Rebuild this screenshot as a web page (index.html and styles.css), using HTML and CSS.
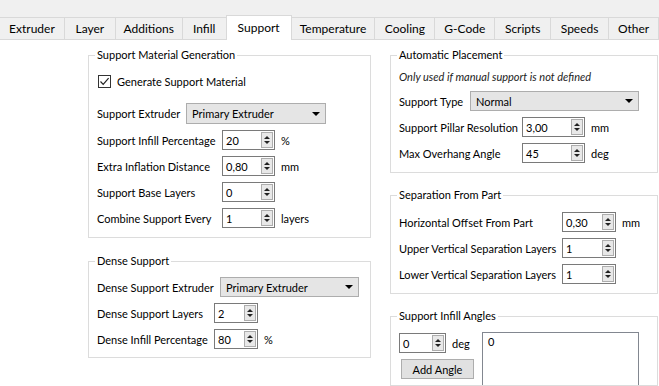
FILE: index.html
```html
<!DOCTYPE html>
<html lang="en">
<head>
    <meta charset="UTF-8">
    <title>Support Settings</title>
    <link rel="stylesheet" href="styles.css">
</head>
<body>
    <!-- Tab bar -->
    <div class="tabbar">
        <div class="tab t-extruder">Extruder</div>
        <div class="tab t-layer">Layer</div>
        <div class="tab t-additions">Additions</div>
        <div class="tab t-infill">Infill</div>
        <div class="tab t-support active">Support</div>
        <div class="tab t-temperature">Temperature</div>
        <div class="tab t-cooling">Cooling</div>
        <div class="tab t-gcode">G-Code</div>
        <div class="tab t-scripts">Scripts</div>
        <div class="tab t-speeds">Speeds</div>
        <div class="tab t-other">Other</div>
    </div>

    <div class="pane">
        <!-- Left column -->
        <div class="col col-left">
            <fieldset class="group g-material">
                <legend>Support Material Generation</legend>
                <div class="check-row">
                    <span class="checkbox">
                        <svg width="11" height="11" viewBox="0 0 11 11"><path d="M1.5 5.5 L4.2 8.3 L9.6 2.2" fill="none" stroke="#222" stroke-width="1.2"/></svg>
                    </span>
                    <span>Generate Support Material</span>
                </div>
                <div class="row row-combo">
                    <span class="lbl w-89">Support Extruder</span>
                    <div class="combo w-140">Primary Extruder<span class="caret"></span></div>
                </div>
                <div class="row">
                    <span class="lbl w-125">Support Infill Percentage</span>
                    <div class="spin w-53"><span class="val">20</span><span class="arrows"><i class="up"></i><i class="down"></i></span></div>
                    <span class="unit">%</span>
                </div>
                <div class="row">
                    <span class="lbl w-125">Extra Inflation Distance</span>
                    <div class="spin w-53"><span class="val">0,80</span><span class="arrows"><i class="up"></i><i class="down"></i></span></div>
                    <span class="unit">mm</span>
                </div>
                <div class="row">
                    <span class="lbl w-125">Support Base Layers</span>
                    <div class="spin w-53"><span class="val">0</span><span class="arrows"><i class="up"></i><i class="down"></i></span></div>
                </div>
                <div class="row">
                    <span class="lbl w-125">Combine Support Every</span>
                    <div class="spin w-53"><span class="val">1</span><span class="arrows"><i class="up"></i><i class="down"></i></span></div>
                    <span class="unit">layers</span>
                </div>
            </fieldset>

            <fieldset class="group g-dense">
                <legend>Dense Support</legend>
                <div class="row">
                    <span class="lbl w-123">Dense Support Extruder</span>
                    <div class="combo w-139">Primary Extruder<span class="caret"></span></div>
                </div>
                <div class="row">
                    <span class="lbl w-117">Dense Support Layers</span>
                    <div class="spin w-44"><span class="val">2</span><span class="arrows"><i class="up"></i><i class="down"></i></span></div>
                </div>
                <div class="row">
                    <span class="lbl w-117">Dense Infill Percentage</span>
                    <div class="spin w-44"><span class="val">80</span><span class="arrows"><i class="up"></i><i class="down"></i></span></div>
                    <span class="unit">%</span>
                </div>
            </fieldset>
        </div>

        <!-- Right column -->
        <div class="col col-right">
            <fieldset class="group g-auto">
                <legend>Automatic Placement</legend>
                <div class="note">Only used if manual support is not defined</div>
                <div class="row">
                    <span class="lbl w-71">Support Type</span>
                    <div class="combo w-169">Normal<span class="caret"></span></div>
                </div>
                <div class="row">
                    <span class="lbl w-123">Support Pillar Resolution</span>
                    <div class="spin w-63"><span class="val">3,00</span><span class="arrows"><i class="up"></i><i class="down"></i></span></div>
                    <span class="unit">mm</span>
                </div>
                <div class="row">
                    <span class="lbl w-123">Max Overhang Angle</span>
                    <div class="spin w-63"><span class="val">45</span><span class="arrows"><i class="up"></i><i class="down"></i></span></div>
                    <span class="unit">deg</span>
                </div>
            </fieldset>

            <fieldset class="group g-separation">
                <legend>Separation From Part</legend>
                <div class="row">
                    <span class="lbl w-163">Horizontal Offset From Part</span>
                    <div class="spin w-54"><span class="val">0,30</span><span class="arrows"><i class="up"></i><i class="down"></i></span></div>
                    <span class="unit">mm</span>
                </div>
                <div class="row">
                    <span class="lbl w-163">Upper Vertical Separation Layers</span>
                    <div class="spin w-54"><span class="val">1</span><span class="arrows"><i class="up"></i><i class="down"></i></span></div>
                </div>
                <div class="row">
                    <span class="lbl w-163">Lower Vertical Separation Layers</span>
                    <div class="spin w-54"><span class="val">1</span><span class="arrows"><i class="up"></i><i class="down"></i></span></div>
                </div>
            </fieldset>

            <fieldset class="group g-angles">
                <legend>Support Infill Angles</legend>
                <div class="angles">
                    <div class="angle-controls">
                        <div class="angle-input">
                            <div class="spin w-47"><span class="val">0</span><span class="arrows"><i class="up"></i><i class="down"></i></span></div>
                            <span class="unit">deg</span>
                        </div>
                        <button class="btn">Add Angle</button>
                    </div>
                    <div class="listbox">0</div>
                </div>
            </fieldset>
        </div>
    </div>
</body>
</html>
```

FILE: styles.css
```css
body {
    margin: 0;
    width: 659px;
    height: 386px;
    overflow: hidden;
    font-family: Lato, "Open Sans", sans-serif;
    font-size: 11px;
    color: #000;
    background: #fff;
}

/* Tabs */
.tabbar {
    height: 40px;
    box-sizing: border-box;
    display: flex;
    align-items: flex-end;
    background: #f0f0f0;
    border-bottom: 1px solid #d9d9d9;
}

.tab {
    height: 22px;
    box-sizing: border-box;
    display: flex;
    align-items: center;
    justify-content: center;
    border: 1px solid #d9d9d9;
    border-bottom: none;
    margin-left: -1px;
    background: #f0f0f0;
    font-size: 12px;
}

.tab.active {
    height: 25px;
    margin-bottom: -1px;
    background: #fff;
    position: relative;
    z-index: 1;
    padding-bottom: 2px;
}

.t-extruder { width: 65px; margin-left: 0; border-left: none; }
.t-layer { width: 52px; }
.t-additions { width: 68px; }
.t-infill { width: 45px; }
.t-support { width: 66px; }
.t-temperature { width: 85px; }
.t-cooling { width: 61px; }
.t-gcode { width: 61px; }
.t-scripts { width: 57px; }
.t-speeds { width: 59px; }
.t-other { width: 51px; }

/* Layout */
.pane {
    display: flex;
    gap: 19px;
    padding-left: 88px;
}

.col-left { width: 283px; }
.col-right { width: 268px; }

.group {
    margin: 0;
    border: 1px solid #dcdcdc;
    padding: 8px 8px 9px 8px;
    min-width: 0;
}

.group legend {
    padding: 0 2px;
    margin-left: -2px;
    line-height: 16px;
}

.g-material { margin-top: 7px; }
.g-dense { margin-top: 15px; padding-bottom: 8px; }
.g-auto { margin-top: 7px; padding-top: 6px; }
.g-separation { margin-top: 14px; padding-top: 9px; }
.g-angles { margin-top: 14px; padding-top: 8px; padding-bottom: 0; }

.row {
    display: flex;
    align-items: center;
    height: 20px;
    margin-top: 6px;
}

.row:first-of-type { margin-top: 0; }

.row-combo {
    height: 21px;
    margin-top: 12px;
}

.row-combo + .row { margin-top: 6px; }

.lbl { flex: none; white-space: nowrap; }

.w-71 { width: 71px; }
.w-89 { width: 89px; }
.w-117 { width: 117px; }
.w-123 { width: 123px; }
.w-125 { width: 125px; }
.w-163 { width: 163px; }

.unit { margin-left: 6px; }

/* Checkbox */
.check-row {
    display: flex;
    align-items: center;
    height: 20px;
}

.checkbox {
    width: 13px;
    height: 13px;
    box-sizing: border-box;
    border: 1px solid #333;
    background: #fff;
    margin: 0 6px 0 1px;
    display: flex;
    align-items: center;
    justify-content: center;
}

.note {
    font-style: italic;
    line-height: 16px;
    color: #222;
}

.note + .row { margin-top: 6px; }

/* Combo box */
.combo {
    height: 100%;
    box-sizing: border-box;
    display: flex;
    align-items: center;
    justify-content: space-between;
    padding: 0 5px 0 5px;
    background: #e5e5e5;
    border: 1px solid #adadad;
}

.w-139 { width: 139px; }
.w-140 { width: 140px; }
.w-169 { width: 169px; }

.caret {
    width: 0;
    height: 0;
    border-left: 4px solid transparent;
    border-right: 4px solid transparent;
    border-top: 4px solid #000;
}

/* Spin box */
.spin {
    height: 20px;
    box-sizing: border-box;
    display: flex;
    align-items: center;
    padding: 0 1px 0 3px;
    background: #fff;
    border: 1px solid #7a7a7a;
}

.w-44 { width: 44px; }
.w-47 { width: 47px; }
.w-53 { width: 53px; }
.w-54 { width: 54px; }
.w-63 { width: 63px; }

.val { flex: 1; }

.arrows {
    width: 12px;
    height: 16px;
    box-sizing: border-box;
    border: 1px solid #adadad;
    background: #e8e8e8;
    display: flex;
    flex-direction: column;
    align-items: center;
    justify-content: space-evenly;
}

.arrows i {
    width: 0;
    height: 0;
    border-left: 3px solid transparent;
    border-right: 3px solid transparent;
}

.arrows .up { border-bottom: 3px solid #222; }
.arrows .down { border-top: 3px solid #222; }

/* Infill angles */
.angles {
    display: flex;
    gap: 8px;
}

.angle-controls { width: 75px; }

.angle-input {
    display: flex;
    align-items: center;
    margin-top: 1px;
}

.btn {
    display: block;
    width: 73px;
    height: 20px;
    margin: 6px 0 0 2px;
    padding: 0;
    font: inherit;
    color: #000;
    background: #e1e1e1;
    border: 1px solid #adadad;
}

.listbox {
    width: 157px;
    height: 53px;
    box-sizing: border-box;
    padding: 2px 5px;
    border: 1px solid #828790;
    border-bottom: none;
    background: #fff;
}
```
